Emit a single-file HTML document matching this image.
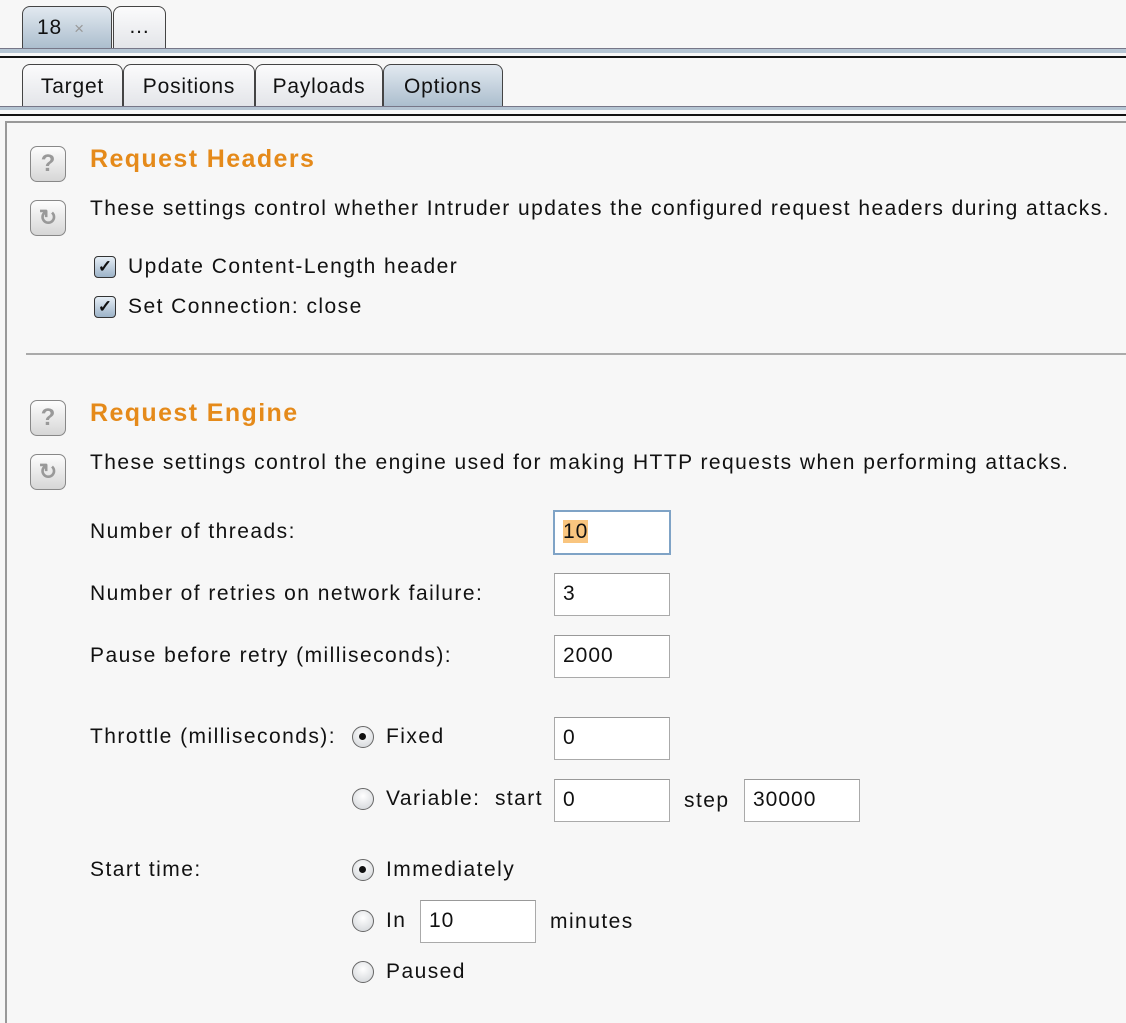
<!DOCTYPE html>
<html><head><meta charset="utf-8"><style>
body{margin:0;width:1126px;height:1004px;background:#f7f7f7;position:relative;overflow:hidden;font-family:"Liberation Sans",sans-serif;font-size:21px;color:#111;letter-spacing:1.45px}
.a{position:absolute;white-space:nowrap}
.tab{position:absolute;border:1.5px solid #444;border-bottom:none;border-radius:8px 8px 0 0;background:linear-gradient(#fbfbfc,#e2e4e8);box-sizing:border-box;text-align:center;font-size:21px;letter-spacing:0.8px}
.sel{background:linear-gradient(#e2e9f0,#a9bccc)}
.ico{position:absolute;left:30px;width:36px;height:36px;box-sizing:border-box;border:1.5px solid #888;border-radius:7px;background:linear-gradient(#fdfdfd,#d6d6d6);color:#999;font-size:24px;text-align:center;line-height:34px;font-weight:bold;letter-spacing:0}
.h{position:absolute;left:90px;color:#e58a1a;font-weight:bold;font-size:25px;letter-spacing:1.4px}
.cb{position:absolute;left:94px;width:22px;height:22px;box-sizing:border-box;border:1.5px solid #333;border-radius:4px;background:linear-gradient(#e6eef6,#9cb3c8);font-size:17px;line-height:19px;text-align:center;letter-spacing:0;font-weight:bold}
.in{position:absolute;height:43px;box-sizing:border-box;border:1.5px solid #aaa;border-top-color:#999;background:#fff;padding-left:8px;line-height:40px;letter-spacing:1px}
.rd{position:absolute;left:352px;width:22px;height:22px;box-sizing:border-box;border:1.5px solid #666;border-radius:50%;background:radial-gradient(circle at 50% 35%,#fff,#cfd2d6)}
.rd.on::after{content:"";position:absolute;left:6px;top:6px;width:7px;height:7px;border-radius:50%;background:#111}
.lbl{position:absolute;left:90px}
</style></head><body>
<div class="tab sel" style="left:22px;top:6px;width:90px;height:44px;line-height:42px;text-align:left;padding-left:14px">18 <span style="color:#999;font-size:17px">&nbsp;×</span></div>
<div class="tab" style="left:113px;top:6px;width:53px;height:44px;line-height:40px">...</div>
<div class="a" style="left:0;top:48px;width:1126px;height:4px;background:#b5c5d3;border-top:1px solid #778"></div>
<div class="a" style="left:0;top:56px;width:1126px;height:2px;background:#111"></div>
<div class="tab" style="left:22px;top:64px;width:101px;height:44px;line-height:44px">Target</div>
<div class="tab" style="left:123px;top:64px;width:132px;height:44px;line-height:44px">Positions</div>
<div class="tab" style="left:255px;top:64px;width:128px;height:44px;line-height:44px">Payloads</div>
<div class="tab sel" style="left:383px;top:64px;width:120px;height:44px;line-height:44px">Options</div>
<div class="a" style="left:0;top:106px;width:1126px;height:3px;background:#b5c5d3;border-top:1px solid #778"></div>
<div class="a" style="left:0;top:114px;width:1126px;height:2px;background:#111"></div>
<div class="a" style="left:5px;top:121px;width:1126px;height:900px;border-left:2px solid #999;border-top:2px solid #999"></div>

<div class="ico" style="top:146px">?</div>
<div class="ico" style="top:200px;font-size:22px">↻</div>
<div class="h" style="top:145px">Request Headers</div>
<div class="a" style="left:90px;top:197px">These settings control whether Intruder updates the configured request headers during attacks.</div>
<div class="cb" style="top:256px">✓</div><div class="a" style="left:128px;top:255px">Update Content-Length header</div>
<div class="cb" style="top:296px">✓</div><div class="a" style="left:128px;top:295px">Set Connection: close</div>
<div class="a" style="left:26px;top:353px;width:1100px;height:2px;background:#aaa"></div>

<div class="ico" style="top:400px">?</div>
<div class="ico" style="top:454px;font-size:22px">↻</div>
<div class="h" style="top:399px">Request Engine</div>
<div class="a" style="left:90px;top:451px">These settings control the engine used for making HTTP requests when performing attacks.</div>

<div class="lbl" style="top:520px">Number of threads:</div>
<div class="in" style="left:553px;top:510px;width:118px;height:45px;border:2px solid #7fa3c6"><span style="background:#f9c57f">10</span></div>
<div class="lbl" style="top:582px">Number of retries on network failure:</div>
<div class="in" style="left:554px;top:573px;width:116px">3</div>
<div class="lbl" style="top:644px">Pause before retry (milliseconds):</div>
<div class="in" style="left:554px;top:635px;width:116px">2000</div>
<div class="lbl" style="top:725px">Throttle (milliseconds):</div>
<div class="rd on" style="top:726px"></div><div class="a" style="left:386px;top:725px">Fixed</div>
<div class="in" style="left:554px;top:717px;width:116px">0</div>
<div class="rd" style="top:788px"></div><div class="a" style="left:386px;top:787px">Variable:&nbsp; start</div>
<div class="in" style="left:554px;top:779px;width:116px">0</div>
<div class="a" style="left:684px;top:789px">step</div>
<div class="in" style="left:744px;top:779px;width:116px">30000</div>
<div class="lbl" style="top:858px">Start time:</div>
<div class="rd on" style="top:859px"></div><div class="a" style="left:386px;top:858px">Immediately</div>
<div class="rd" style="top:910px"></div><div class="a" style="left:386px;top:909px">In</div>
<div class="in" style="left:420px;top:900px;width:116px">10</div>
<div class="a" style="left:550px;top:910px">minutes</div>
<div class="rd" style="top:961px"></div><div class="a" style="left:386px;top:960px">Paused</div>
</body></html>
